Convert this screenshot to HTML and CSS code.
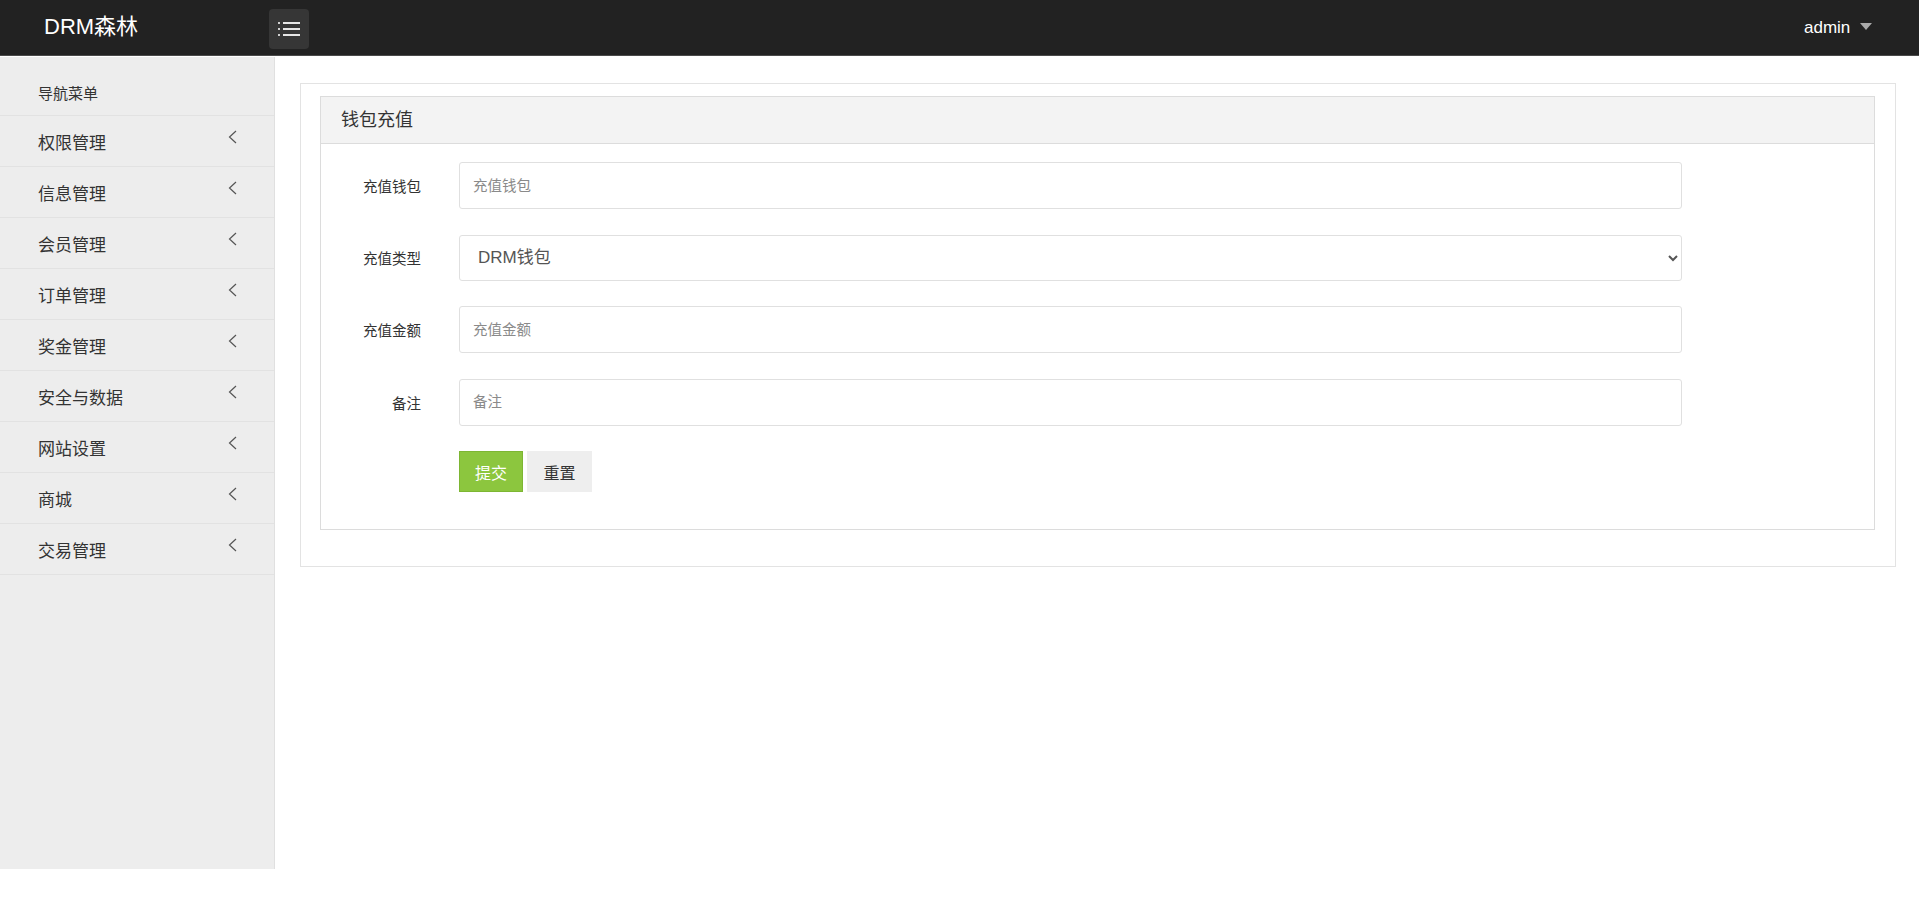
FILE: index.html
```html
<!DOCTYPE html>
<html>

<head>
    <meta charset="UTF-8">
    <meta name="viewport" content="width=device-width, initial-scale=1.0">
    <link rel="stylesheet" href="styles.css">
    <title>钱包充值</title>
</head>

<body>
    <header class="topbar">
        <div class="logo">DRM森林</div>
        <button class="menu-toggle" type="button">
            <svg width="22" height="14" viewBox="0 0 22 14">
                <rect x="0" y="0" width="2" height="2" fill="#cfcfcf" />
                <rect x="0" y="6" width="2" height="2" fill="#cfcfcf" />
                <rect x="0" y="12" width="2" height="2" fill="#cfcfcf" />
                <rect x="5" y="0" width="17" height="2" fill="#e6e6e6" />
                <rect x="5" y="6" width="17" height="2" fill="#e6e6e6" />
                <rect x="5" y="12" width="17" height="2" fill="#e6e6e6" />
            </svg>
        </button>
        <div class="user">admin <span class="caret"></span></div>
    </header>

    <div class="layout">
        <aside class="sidebar">
            <div class="nav-title">导航菜单</div>
            <ul class="nav">
                <li><span>权限管理</span><svg class="chev" width="9" height="14" viewBox="0 0 9 14"><polyline points="8,1 1.5,7 8,13" /></svg></li>
                <li><span>信息管理</span><svg class="chev" width="9" height="14" viewBox="0 0 9 14"><polyline points="8,1 1.5,7 8,13" /></svg></li>
                <li><span>会员管理</span><svg class="chev" width="9" height="14" viewBox="0 0 9 14"><polyline points="8,1 1.5,7 8,13" /></svg></li>
                <li><span>订单管理</span><svg class="chev" width="9" height="14" viewBox="0 0 9 14"><polyline points="8,1 1.5,7 8,13" /></svg></li>
                <li><span>奖金管理</span><svg class="chev" width="9" height="14" viewBox="0 0 9 14"><polyline points="8,1 1.5,7 8,13" /></svg></li>
                <li><span>安全与数据</span><svg class="chev" width="9" height="14" viewBox="0 0 9 14"><polyline points="8,1 1.5,7 8,13" /></svg></li>
                <li><span>网站设置</span><svg class="chev" width="9" height="14" viewBox="0 0 9 14"><polyline points="8,1 1.5,7 8,13" /></svg></li>
                <li><span>商城</span><svg class="chev" width="9" height="14" viewBox="0 0 9 14"><polyline points="8,1 1.5,7 8,13" /></svg></li>
                <li><span>交易管理</span><svg class="chev" width="9" height="14" viewBox="0 0 9 14"><polyline points="8,1 1.5,7 8,13" /></svg></li>
            </ul>
        </aside>

        <main class="main">
            <div class="box">
                <div class="panel">
                    <div class="panel-heading">钱包充值</div>
                    <form class="panel-body">
                        <div class="form-row">
                            <label for="wallet">充值钱包</label>
                            <input type="text" id="wallet" placeholder="充值钱包">
                        </div>
                        <div class="form-row">
                            <label for="type">充值类型</label>
                            <select id="type">
                                <option>DRM钱包</option>
                            </select>
                        </div>
                        <div class="form-row">
                            <label for="amount">充值金额</label>
                            <input type="text" id="amount" placeholder="充值金额">
                        </div>
                        <div class="form-row">
                            <label for="remark">备注</label>
                            <input type="text" id="remark" placeholder="备注">
                        </div>
                        <div class="form-row actions">
                            <label></label>
                            <button type="submit" class="btn btn-green">提交</button>
                            <button type="reset" class="btn btn-gray">重置</button>
                        </div>
                    </form>
                </div>
            </div>
        </main>
    </div>
</body>

</html>
```

FILE: styles.css
```css
body {
    margin: 0;
    font-family: 'Liberation Sans', 'Noto Sans CJK SC', sans-serif;
    color: #333;
    background-color: #fff;
}

/* 顶部导航 */
.topbar {
    display: flex;
    align-items: flex-start;
    height: 55px;
    background-color: #222;
    border-bottom: 1px solid #4a4a4a;
}

.logo {
    width: 225px;
    padding-left: 44px;
    line-height: 54px;
    font-size: 22px;
    color: #fff;
}

.menu-toggle {
    width: 40px;
    height: 40px;
    margin-top: 9px;
    padding: 0;
    border: none;
    border-radius: 4px;
    background-color: #363636;
    display: flex;
    align-items: center;
    justify-content: center;
    cursor: pointer;
}

.user {
    margin-left: auto;
    margin-right: 47px;
    line-height: 56px;
    font-size: 17px;
    color: #fff;
}

.caret {
    display: inline-block;
    width: 0;
    height: 0;
    margin-left: 5px;
    vertical-align: middle;
    border-left: 6.5px solid transparent;
    border-right: 6.5px solid transparent;
    border-top: 7px solid #aaa;
    position: relative;
    top: -2px;
}

.layout {
    display: flex;
    margin-top: 1px;
}

/* 侧边栏 */
.sidebar {
    width: 274px;
    height: 812px;
    background-color: #ededed;
    border-right: 1px solid #e0e0e0;
}

.nav-title {
    height: 31px;
    padding: 27px 0 0 38px;
    font-size: 15px;
    line-height: 20px;
    border-bottom: 1px solid #e2e2e2;
}

.nav {
    list-style: none;
    margin: 0;
    padding: 0;
}

.nav li {
    display: flex;
    align-items: center;
    height: 50px;
    padding: 0 37px 0 38px;
    border-bottom: 1px solid #e2e2e2;
    font-size: 17px;
    color: #333;
}

.chev {
    margin-left: auto;
    margin-top: -8px;
    fill: none;
    stroke: #555;
    stroke-width: 1.2;
}

/* 内容 */
.main {
    flex: 1;
    padding: 26px 23px 0 25px;
}

.box {
    border: 1px solid #e3e3e3;
    padding: 12px 20px 36px 19px;
}

.panel {
    border: 1px solid #dcdcdc;
}

.panel-heading {
    height: 46px;
    line-height: 46px;
    padding-left: 20px;
    font-size: 18px;
    color: #333;
    background-color: #f3f3f3;
    border-bottom: 1px solid #dcdcdc;
}

.panel-body {
    padding: 18px 0 37px;
}

.form-row {
    display: flex;
    align-items: center;
    margin-bottom: 25.5px;
}

.form-row label {
    width: 100px;
    margin-right: 38px;
    text-align: right;
    font-size: 14.5px;
    color: #333;
}

.form-row input,
.form-row select {
    width: 1223px;
    height: 47px;
    box-sizing: border-box;
    border: 1px solid #e0e0e0;
    border-radius: 3px;
    padding: 0 13px;
    font-family: inherit;
    font-size: 14.5px;
    color: #555;
    background-color: #fff;
    outline: none;
}

.form-row input::placeholder {
    color: #8a8a8a;
}

.form-row select {
    height: 46px;
    padding: 0 14px;
    font-size: 17px;
    color: #555;
}

.form-row.actions {
    margin-bottom: 0;
}

.btn {
    height: 41px;
    border: 1px solid transparent;
    font-family: inherit;
    font-size: 16px;
    cursor: pointer;
}

.btn-green {
    width: 64px;
    background-color: #8cc63e;
    border-color: #7db633;
    color: #fff;
}

.btn-gray {
    width: 65px;
    margin-left: 4px;
    background-color: #eee;
    border-color: #eee;
    color: #333;
}
```
